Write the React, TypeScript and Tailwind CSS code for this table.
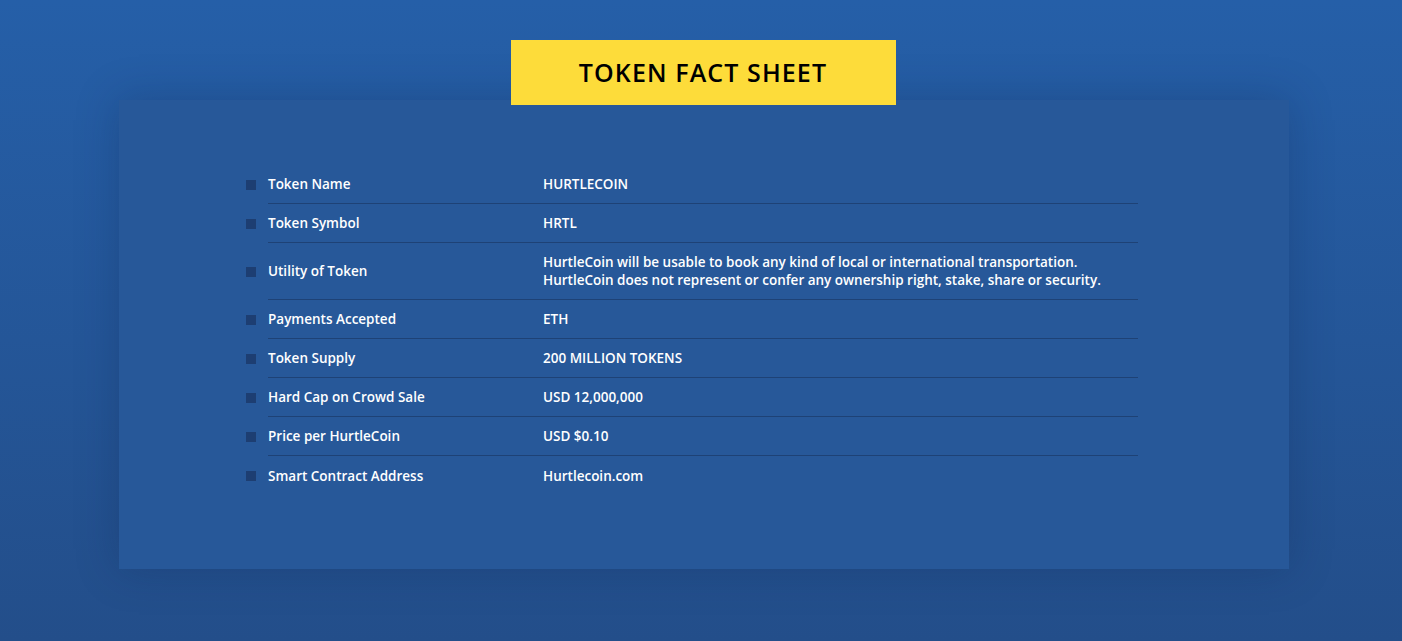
import React from 'react';

// Token facts shown in the table
const facts: { label: string; value: React.ReactNode }[] = [
    { label: 'Token Name', value: 'HURTLECOIN' },
    { label: 'Token Symbol', value: 'HRTL' },
    {
        label: 'Utility of Token',
        value: (
            <>
                HurtleCoin will be usable to book any kind of local or international transportation.
                <br />
                HurtleCoin does not represent or confer any ownership right, stake, share or security.
            </>
        ),
    },
    { label: 'Payments Accepted', value: 'ETH' },
    { label: 'Token Supply', value: '200 MILLION TOKENS' },
    { label: 'Hard Cap on Crowd Sale', value: 'USD 12,000,000' },
    { label: 'Price per HurtleCoin', value: 'USD $0.10' },
    { label: 'Smart Contract Address', value: 'Hurtlecoin.com' },
];

const App: React.FC = () => {
    return (
        <div
            className="w-full min-h-[641px] bg-gradient-to-b from-[#255fa8] to-[#234e8a] pt-10 pb-[72px] pl-[119px] pr-[113px]"
            style={{ fontFamily: '"Open Sans", "Noto Sans", sans-serif' }}
        >
            {/* Title badge */}
            <div className="relative z-10 flex justify-center">
                <div className="w-[385px] h-[65px] bg-[#fddc3a] flex items-center justify-center -translate-x-px">
                    <h1 className="text-[25px] font-semibold text-black tracking-[1.1px] pt-px">TOKEN FACT SHEET</h1>
                </div>
            </div>

            {/* Card */}
            <div className="-mt-[5px] bg-[#275899] shadow-[0_0_40px_rgba(10,30,70,0.25)] pt-[65px] pb-[74px] pl-[127px] pr-[151px]">
                {facts.map((f, idx) => {
                    const last = idx === facts.length - 1;
                    return (
                        <div key={f.label} className="flex items-center">
                            <div className="w-[10px] h-[10px] bg-[#1d3e72] mr-3 shrink-0" />
                            <div
                                className={`flex-1 flex items-center text-[13.5px] font-semibold text-white leading-[18px] ${
                                    last ? 'min-h-[39px]' : 'min-h-[39px] border-b border-[#1e4276]'
                                } ${idx === 2 ? 'py-[10px]' : ''}`}
                            >
                                <div className="w-[275px] shrink-0">{f.label}</div>
                                <div>{f.value}</div>
                            </div>
                        </div>
                    );
                })}
            </div>
        </div>
    );
};

export default App;
